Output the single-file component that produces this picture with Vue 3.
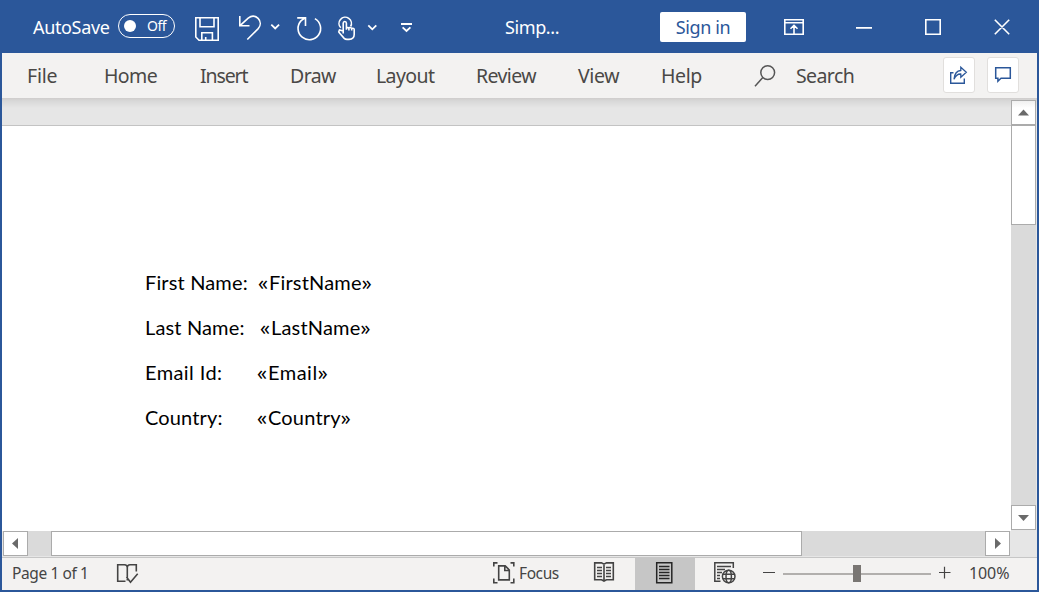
<script setup>
const menu = [
  { t: 'File', c: 'file' },
  { t: 'Home', c: 'home' },
  { t: 'Insert', c: 'insert' },
  { t: 'Draw', c: 'draw' },
  { t: 'Layout', c: 'layout' },
  { t: 'Review', c: 'review' },
  { t: 'View', c: 'view' },
  { t: 'Help', c: 'help' }
]
const fields = [
  { label: 'First Name:', value: 'FirstName', c: 'first' },
  { label: 'Last Name:', value: 'LastName', c: 'last' },
  { label: 'Email Id:', value: 'Email', c: 'email' },
  { label: 'Country:', value: 'Country', c: 'country' }
]
</script>

<template>
  <div class="window">
    <header class="titlebar">
      <span class="autosave">AutoSave</span>
      <span class="toggle"><i class="knob"></i><span class="off">Off</span></span>
      <svg class="quick" width="234" height="53" viewBox="190 0 234 53" fill="none" stroke="#fff" stroke-width="1.6">
        <path d="M195.8 17.8H218.2V40.2H199L195.8 37Z M200 18V26.8H214V18 M201.8 40V32.8H212.4V40 M205.7 37V40" />
        <path d="M239.8 16V25.8H249.5 M240.3 25.3L248.2 18.1C251.5 15.4 255.4 15.8 258.1 18.4C260.9 21.3 261 25.5 258.2 28.6L247.3 39.5" />
        <path d="M271.3 24.6L275.2 28.4L279.1 24.6" stroke-width="1.8" />
        <path d="M314.9 18.6A11.3 11.3 0 1 1 301.2 20.6L304.8 18 M297.2 17.9H305.5V26" />
        <path d="M340.8 27.8A6.2 6.2 0 1 1 350.6 26.5" />
        <path d="M343.2 33.5V23.2Q343.2 21.5 344.8 21.5T346.4 23.2V29.7 M343.2 31.1L339.4 29.9Q338.2 31.6 339.5 33.1L344.2 38.4Q345.2 39.4 347 39.4H349Q354.2 39 354.2 34.5V29.4Q354.2 28 351.7 28.2V30.6 M351.7 28.3Q349.3 26.8 348.9 28.2V30.4 M348.9 27.8L346.4 27.4" stroke-width="1.6" />
        <path d="M368.3 25.4L372.3 29.3L376.3 25.4" stroke-width="1.8" />
        <path d="M401 24H412 M402.6 27.3L406.5 31L410.4 27.3" stroke-width="1.8" />
      </svg>
      <span class="docname">Simp...</span>
      <button class="signin">Sign in</button>
      <svg class="controls" width="279" height="53" viewBox="760 0 279 53" fill="none" stroke="#fff" stroke-width="1.6">
        <path d="M784.8 19.8H803.2V34.2H784.8Z M785 22.7H803 M794 33.5V25.5 M790.5 28.8L794 25.3L797.5 28.8" />
        <path d="M856 27.9H872 M925.8 19.8H940.2V34.2H925.8Z M994.8 19.8L1009.2 34.2M1009.2 19.8L994.8 34.2" />
      </svg>
    </header>

    <nav class="ribbon">
      <span v-for="m in menu" :key="m.t" :class="m.c">{{ m.t }}</span>
      <svg width="42" height="45" viewBox="754 53 42 45" fill="none" stroke="#555" stroke-width="1.5">
        <circle cx="767.7" cy="72.6" r="6.9" /><path d="M762.8 77.5L755 86.3" />
      </svg>
      <span class="search">Search</span>
      <span class="action">
        <svg width="30" height="34" viewBox="944 58 30 34" fill="none" stroke="#2b579a" stroke-width="1.4">
          <path d="M953.5 72.7H950.7V83.3H964.3V78.5" />
          <path d="M954 79.2Q954.8 70.8 960.8 70.5V67.2L966.3 72.2L960.8 77.2V74Q956.3 73.8 954 79.2Z" stroke-width="1.3" />
        </svg>
      </span>
      <span class="action comment">
        <svg width="30" height="34" viewBox="988 58 30 34" fill="none" stroke="#2b579a" stroke-width="1.5">
          <path d="M995.7 67.8H1010.3V78.3H1001L997.9 81.2V78.3H995.7Z" />
        </svg>
      </span>
    </nav>

    <main class="workspace">
      <section class="canvas">
        <div class="desk"></div>
        <article class="page">
          <div v-for="f in fields" :key="f.label" class="field" :class="f.c">
            <span class="label">{{ f.label }}</span><span class="value"><span class="mark">«</span>{{ f.value }}<span class="mark">»</span></span>
          </div>
        </article>
      </section>
      <aside class="vbar">
        <div class="btn up"><svg width="23" height="23"><path d="M6 14.5L11.5 8.5L17 14.5Z" fill="#6a6a6a" /></svg></div>
        <div class="vthumb"></div>
        <div class="vtrack"></div>
        <div class="btn"><svg width="23" height="23"><path d="M6 9L11.5 15L17 9Z" fill="#6a6a6a" /></svg></div>
      </aside>
    </main>
    <div class="hbar">
      <div class="btn"><svg width="23" height="23"><path d="M14 6V17L8 11.5Z" fill="#6a6a6a" /></svg></div>
      <div class="gap"></div>
      <div class="hthumb"></div>
      <div class="htrack"></div>
      <div class="btn"><svg width="23" height="23"><path d="M9 6V17L15 11.5Z" fill="#6a6a6a" /></svg></div>
    </div>

    <footer class="status">
      <span class="pages">Page 1 of 1</span>
      <svg class="proof" width="24" height="32" viewBox="116 558 24 32" fill="none" stroke="#444" stroke-width="1.6">
        <path d="M127.3 567V580.5 M125.5 581.3H117.7V564.8H124.5Q127.3 564.8 127.3 567.5Q127.3 564.8 130 564.8H136.3V571.5 M126.5 577L130.5 582.3L137.7 573.8" />
      </svg>
      <svg class="focus-icon" width="24" height="32" viewBox="492 558 24 32" fill="none" stroke="#444" stroke-width="1.6">
        <path d="M497.5 562.9H493.8V566.5 M510.5 562.9H513.8V566.5 M497.5 582.8H493.8V578.5 M510.5 582.8H513.8V578.5" />
        <path d="M498.7 565.9H505.2L509.3 570V579.9H498.7Z M504.8 566V570.5H509" />
      </svg>
      <span class="focus">Focus</span>
      <svg class="read" width="22" height="32" viewBox="593 558 22 32" fill="none" stroke="#444" stroke-width="1.6">
        <path d="M604 565V581 M594.7 562.9H601.5L604 564.2L606.5 562.9H613.3V579.7H606.5L604 581L601.5 579.7H594.7Z" />
        <path d="M597 567.5H602M597 570.5H602M597 573.5H602M597 576.5H602M606 567.5H611M606 570.5H611M606 573.5H611M606 576.5H611" stroke-width="1.3" />
      </svg>
      <span class="active">
        <svg width="18" height="32" viewBox="655 558 18 32" fill="none" stroke="#252525" stroke-width="1.5">
          <path d="M656.7 562.8H671.8V582.8H656.7Z M659 566.5H669.5M659 569.5H669.5M659 572.5H669.5M659 575.5H669.5M659 578.5H669.5" />
        </svg>
      </span>
      <svg class="web" width="24" height="32" viewBox="713 558 24 32" fill="none" stroke="#444" stroke-width="1.5">
        <path d="M720.5 581.3H714.8V562.8H733.3V568 M717 566.5H731M717 569.5H725M717 572.5H722M717 575.5H720M717 578.5H720" />
        <circle cx="728.7" cy="576.5" r="6.3" /><ellipse cx="728.7" cy="576.5" rx="2.7" ry="6.3" /><path d="M723 574.3H734.5M723 578.7H734.5" />
      </svg>
      <i class="minus"></i>
      <div class="slider"><i></i></div>
      <svg class="plus" width="12" height="32" viewBox="939 558 12 32" stroke="#444" stroke-width="1.2"><path d="M939 572.5H950.5M944.5 566.8V578.5" /></svg>
      <span class="percent">100%</span>
    </footer>
  </div>
</template>

<style>
body { margin: 0; overflow: hidden; }
</style>
<style scoped>
* { box-sizing: border-box; }
.window { width: 1039px; height: 592px; border: 2px solid #2b579a; border-top: 0; display: flex; flex-direction: column; background: #fff; font-family: "Noto Sans", "Open Sans", sans-serif; white-space: nowrap; }
svg { display: block; flex: none; }
span { flex: none; }
.titlebar { height: 53px; flex: none; margin: 0 -2px; background: #2b579a; color: #fff; display: flex; align-items: center; font-size: 18px; }
.autosave { margin-left: 33px; width: 85px; letter-spacing: -0.35px; }
.toggle { width: 57px; height: 24px; border: 1.3px solid #fff; border-radius: 12px; display: flex; align-items: center; padding-left: 5px; margin: -1px 15px 0 0; }
.knob { width: 12px; height: 12px; border-radius: 50%; background: #fff; }
.off { margin-left: 11px; font-size: 14px; letter-spacing: -0.5px; line-height: 20px; }
.docname { margin-left: 81px; width: 155px; letter-spacing: -0.4px; }
.signin { width: 86px; height: 30px; margin-right: 14px; padding: 0; border: 0; border-radius: 2px; background: #fff; color: #2b579a; font: 18px/30px "Noto Sans", sans-serif; letter-spacing: -0.4px; }
.ribbon { height: 45px; flex: none; display: flex; align-items: center; background: #f3f2f1; color: #4a4846; font-size: 19.5px; letter-spacing: -0.6px; padding-left: 25px; }
.file { width: 77px; letter-spacing: -0.2px; } .home { width: 96px; } .insert { width: 90px; letter-spacing: -1.1px; } .draw { width: 86px; }
.layout { width: 100px; } .review { width: 102px; } .view { width: 83px; letter-spacing: -0.4px; } .help { width: 93px; letter-spacing: -0.4px; }
.search { width: 147px; }
.action { width: 32px; height: 36px; border: 1px solid #e1dfdd; border-radius: 3px; background: #fff; margin-top: -1px; }
.comment { margin-left: 12px; }
.workspace { height: 433px; flex: none; display: flex; background: linear-gradient(#cfcdcc, #d8d8d8 3px, #e6e6e6 10px); }
.canvas { width: 1009px; }
.desk { height: 28px; border-bottom: 1px solid #c3c3c3; }
.page { height: 405px; background: #fff; padding: 134px 0 0 143px; color: #000; font: 20px/45px Lato, sans-serif; }
.field { height: 45px; display: flex; }
.label { width: 113px; letter-spacing: 0.15px; }
.value { letter-spacing: 0.2px; }
.mark { font: 19.5px/1 "Noto Sans", sans-serif; letter-spacing: 1px; }
.last .label { width: 115px; }
.email .label, .country .label { width: 112px; }
.email .label { letter-spacing: 0.4px; }
.email .value { letter-spacing: 0.5px; }
.vbar { width: 25px; padding-top: 2px; }
.btn { width: 25px; height: 25px; border: 1px solid #ababab; background: #fff; flex: none; }
.up { background: linear-gradient(#f0f0f0, #fff 7px); }
.vthumb { height: 100px; border: 1px solid #ababab; background: #fff; }
.vtrack { height: 280px; background: #dadada; }
.hbar { height: 26px; flex: none; background: #e6e6e6; display: flex; padding-left: 1px; }
.gap { width: 23px; height: 25px; background: #dadada; }
.hthumb { width: 751px; height: 25px; border: 1px solid #ababab; background: #fff; }
.htrack { width: 183px; height: 25px; background: #dadada; }
.status { height: 33px; flex: none; border-top: 1px solid #c6c6c6; background: #f3f2f1; color: #444; display: flex; align-items: center; font-size: 15.5px; letter-spacing: -0.4px; }
.pages { margin-left: 10px; width: 104px; margin-top: -2px; }
.focus-icon { margin-left: 352px; }
.focus { margin-left: 3px; width: 74px; margin-top: -2px; }
.active { width: 60px; height: 32px; margin-left: 20px; padding-left: 20px; background: #c6c6c6; }
.web { margin-left: 18px; }
.minus { width: 12px; height: 1px; background: #444; margin-left: 26px; margin-top: -3px; }
.slider { width: 148px; height: 2px; background: #b1afad; margin-left: 8px; margin-top: -1px; display: flex; align-items: center; }
.slider i { width: 8px; height: 17px; background: #797673; margin-left: 70px; }
.plus { margin-left: 8px; }
.percent { margin-left: 18px; font-size: 16px; letter-spacing: -0.1px; margin-top: -2px; }
</style>
